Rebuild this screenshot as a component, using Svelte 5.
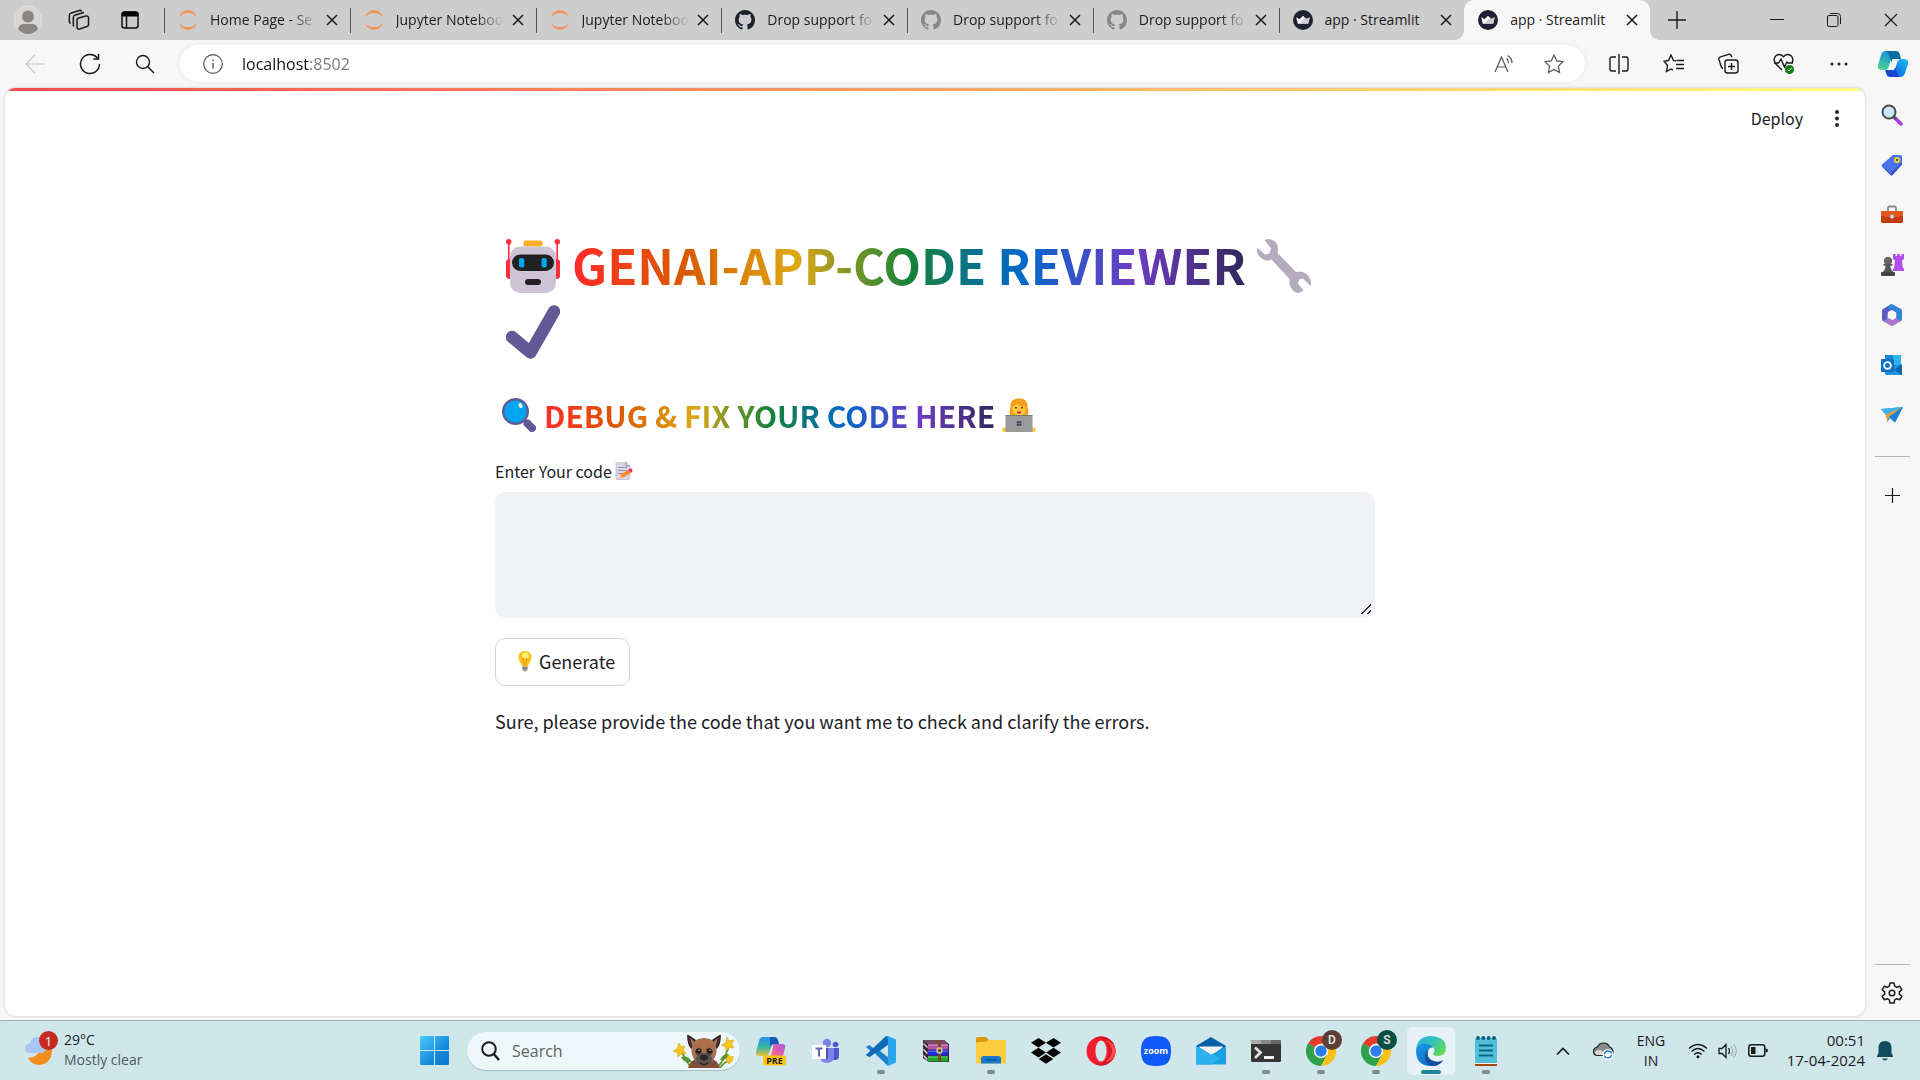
<script>
  let code = $state('');
  let address = $state('localhost:8502');
  let query = $state('');

  const tabs = [
    { title: 'Home Page - Se', icon: 'jupyter', clipped: true },
    { title: 'Jupyter Noteboo', icon: 'jupyter', clipped: true },
    { title: 'Jupyter Noteboo', icon: 'jupyter', clipped: true },
    { title: 'Drop support fo', icon: 'github', clipped: true },
    { title: 'Drop support fo', icon: 'github-grey', clipped: true },
    { title: 'Drop support fo', icon: 'github-grey', clipped: true },
    { title: 'app · Streamlit', icon: 'streamlit' },
    { title: 'app · Streamlit', icon: 'streamlit', active: true }
  ];
</script>

{#snippet closeIcon()}
  <svg width="12" height="12" viewBox="0 0 12 12" class="line"><path d="M1 1l10 10M11 1L1 11" stroke-width="1.5" /></svg>
{/snippet}

{#snippet favicon(kind)}
  {#if kind === 'jupyter'}
    <svg width="20" height="22" viewBox="0 0 20 22" fill="#ee9458">
      <path d="M1 8C2.500 3.500 6 1.200 10 1.200S17.500 3.500 19 8C16.500 5 13.500 3.900 10 3.900S3.500 5 1 8z" />
      <path d="M1 14C2.500 18.500 6 20.800 10 20.800s7.500-2.300 9-6.800c-2.500 3-5.500 4.100-9 4.100S3.500 17 1 14z" />
    </svg>
  {:else if kind === 'streamlit'}
    <svg width="20" height="20" viewBox="0 0 20 20">
      <circle cx="10" cy="10" r="10" fill="#1f2030" />
      <path d="M3.200 7.200l3.300 2 3.500-3.400 3.500 3.400 3.300-2-1.600 6.500H4.800z" fill="#fff" />
      <path d="M10 9l6.800-1.800-1.600 6.500H7z" fill="#b9b9bd" opacity=".7" />
    </svg>
  {:else}
    <svg width="20" height="20" viewBox="0 0 16 16" fill={kind === 'github' ? '#1b222b' : '#85888b'}>
      <path d="M8 0C3.580 0 0 3.580 0 8c0 3.540 2.290 6.530 5.470 7.590.4.070.55-.17.55-.38 0-.19-.01-.82-.01-1.490-2.010.37-2.530-.49-2.690-.94-.09-.23-.48-.94-.82-1.130-.28-.15-.68-.52-.01-.53.63-.01 1.080.58 1.230.82.72 1.210 1.870.87 2.330.66.070-.52.28-.87.51-1.070-1.780-.2-3.640-.89-3.640-3.950 0-.87.31-1.590.82-2.150-.08-.2-.36-1.020.08-2.120 0 0 .67-.21 2.200.82.64-.18 1.320-.27 2-.27s1.360.09 2 .27c1.530-1.040 2.200-.82 2.200-.82.44 1.100.16 1.920.08 2.120.51.56.82 1.270.82 2.150 0 3.070-1.870 3.750-3.650 3.950.29.25.54.73.54 1.480 0 1.070-.01 1.930-.01 2.200 0 .21.15.46.55.38A8.010 8.010 0 0 0 16 8c0-4.420-3.580-8-8-8z" />
    </svg>
  {/if}
{/snippet}

<!-- Sidebar icons -->
{#snippet sideSearch()}
  <svg width="22" height="22" viewBox="0 0 22 22">
    <path d="M14 14l6 6" stroke="#a83be8" stroke-width="3.500" stroke-linecap="round" />
    <path d="M12 12l3 3" stroke="#555" stroke-width="2.500" />
    <circle cx="8" cy="8" r="6.500" fill="#c8e7fb" stroke="#4c4c4c" stroke-width="2" />
  </svg>
{/snippet}
{#snippet sideTag()}
  <svg width="22" height="22" viewBox="0 0 22 22">
    <path d="M12 1h7.500Q21 1 21 3v7.500L11.500 21q-1 .8-2 0L1 12.500q-.8-1 0-2z" fill="#4a74ee" />
    <path d="M1 12.500L9.500 21q1 .8 2 0L21 10.500v-2L9.500 19z" fill="#3c50c8" />
    <circle cx="16" cy="6" r="2.200" fill="#3c50c8" stroke="#ffd629" stroke-width="1.800" />
  </svg>
{/snippet}
{#snippet sideTools()}
  <svg width="24" height="20" viewBox="0 0 24 20">
    <path d="M8 6V3q0-1.500 1.500-1.500h5Q16 1.500 16 3v3" fill="none" stroke="#8a8a8a" stroke-width="1.800" />
    <rect x="1" y="6" width="22" height="12" rx="1.500" fill="#c23c10" />
    <path d="M1 7.500Q1 6 2.500 6h19Q23 6 23 7.500V11q-11 2.500-22 0z" fill="#e3561c" />
    <rect x="10" y="9.500" width="4" height="4" rx="1.500" fill="#ddd" stroke="#888" stroke-width=".6" />
  </svg>
{/snippet}
{#snippet sideGames()}
  <svg width="24" height="24" viewBox="0 0 24 24">
    <path d="M13 1h2.500v2h1.700V1h2.600v2h1.700V1H24v5l-2 1.500.8 7 1.200 1.500V18H13v-2l1.200-1.500.8-7L13 6z" fill="#b44df0" />
    <circle cx="8" cy="8" r="4.200" fill="#666" />
    <path d="M3.500 11h9v1.800h-2.300q.2 4 3 6.200H2.800q2.800-2.200 3-6.200H3.500z" fill="#555" />
    <rect x="1" y="19" width="14" height="4" rx="1.200" fill="#444" />
  </svg>
{/snippet}
{#snippet sideOffice()}
  <svg width="22" height="24" viewBox="0 0 22 24">
    <path d="M9.500 1.500L2 6Q1 6.600 1 8v8q0 1.400 1 2l4.500 2.500L7 9l7-4z" fill="#5d5cc0" />
    <path d="M21 9v7q0 1.400-1 2l-8 4.700q-1 .5-2 0L2.500 18 8 15l3.500 2 4-2.500z" fill="#a978cc" />
    <path d="M11 1l9 5q1 .6 1 2v8q0 1.500-1.500 2.300L15 15V9.800L7 5.500l1-3.500z" fill="#3384d4" />
    <path d="M11 7.200l4.200 2.400v4.800L11 16.800l-4.200-2.400V9.600z" fill="#f7f7f7" />
  </svg>
{/snippet}
{#snippet sideOutlook()}
  <svg width="22" height="21" viewBox="0 0 22 21">
    <rect x="4" y="0" width="16" height="15" fill="#31b3ee" />
    <path d="M4 0h8v8H4z" fill="#1684d4" />
    <path d="M4 11l17-1.500V20H5.500Q4 20 4 18.500z" fill="#1c93dd" />
    <path d="M21 9.500V20L13 14.500z" fill="#0d62a8" />
    <rect x="0" y="4" width="13" height="13" rx="1" fill="#0d6fc6" />
    <circle cx="6.500" cy="10.500" r="3.400" fill="none" stroke="#fff" stroke-width="1.900" />
  </svg>
{/snippet}
{#snippet sidePlane()}
  <svg width="22" height="18" viewBox="0 0 22 18">
    <path d="M0 3l22-2-8 15.500L9 12.500 6.500 16 5 9z" fill="#2b9be8" />
    <path d="M0 3l22-2L5 9z" fill="#3bb3ea" />
    <path d="M22 1L5 8.500 6.500 16 8.500 10z" fill="#f4a21d" />
    <path d="M22 1L8.500 10.500 14 16.500z" fill="#1d7fd6" />
  </svg>
{/snippet}

<!-- Taskbar application icons -->
{#snippet appCopilot()}
  <svg width="32" height="32" viewBox="0 0 32 32">
    <defs>
      <linearGradient id="pre1" x1="0" y1="0" x2="0" y2="1"><stop offset="0" stop-color="#2a8de8" /><stop offset=".5" stop-color="#32b3a4" /><stop offset="1" stop-color="#e5c53e" /></linearGradient>
      <linearGradient id="pre2" x1="1" y1="0" x2="0" y2="1"><stop offset="0" stop-color="#a55ce8" /><stop offset=".5" stop-color="#ea5fa3" /><stop offset="1" stop-color="#ffa05a" /></linearGradient>
    </defs>
    <path d="M8 2h12l-7 19H4q-3.500 0-3-4L4 6q1-4 4-4z" fill="url(#pre1)" />
    <path d="M15 2h4q3 0 4 3l1 4h-5q-3 0-4 3z" fill="#1b56b8" />
    <path d="M18 9h9q4 0 3 4l-2 8q-1 4-5 4H11q4 0 5-5l2-7z" fill="url(#pre2)" />
    <rect x="8" y="20.500" width="23" height="10" rx="2.500" fill="#ffc412" />
    <text x="19.500" y="28.500" text-anchor="middle" class="pre">PRE</text>
  </svg>
{/snippet}
{#snippet appTeams()}
  <svg width="30" height="28" viewBox="0 0 30 28">
    <circle cx="16" cy="6" r="4.200" fill="#7b83eb" /><circle cx="24.500" cy="7.500" r="2.800" fill="#5059c9" />
    <path d="M20 11h8v8q0 4-4 4h-4z" fill="#5059c9" />
    <path d="M9 11h14v8q0 7-7 7t-7-7z" fill="#7b83eb" />
    <path d="M9 11h8v11H9.500z" fill="#4a52ae" />
    <rect x="1" y="8" width="14" height="14" fill="#fff" />
    <path d="M4.500 11.500h7M8 11.500v8" stroke="#6264a7" stroke-width="2" />
  </svg>
{/snippet}
{#snippet appCode()}
  <svg width="30" height="30" viewBox="0 0 30 30">
    <path d="M22 0L8.500 13 3.500 9 0 11l4.500 4L0 19l3.500 2 5-4L22 30l1-8-9-7 9-7z" fill="#1b7fcc" />
    <path d="M22 8L3.500 21 0 19 20 0h2z" fill="#0f69b4" />
    <path d="M22 0l8 3.500v23L22 30l-2-1.500q2 .5 2-2v-23q0-2.500-2-2z" fill="#2ba4ee" />
  </svg>
{/snippet}
{#snippet appRar()}
  <svg width="28" height="24" viewBox="0 0 28 24">
    <path d="M1 1h21l5 4v18H7l-6-4z" fill="#3b2438" />
    <path d="M1 1h21l4 4H6z" fill="#754966" />
    <path d="M6 5h20v5.500H6z" fill="#b552a3" /><path d="M6 11h20v5.500H6z" fill="#202bdc" /><path d="M6 17h20v5.500H6z" fill="#21a52f" />
    <path d="M1.500 3.500l4 4v2l-4-4zM1.500 9.500l4 4v2l-4-4zM1.500 15.500l4 4v2l-4-4z" fill="#ddd" />
    <path d="M6 6.200h20M6 12.200h20M6 18.200h20" stroke="#fff" stroke-opacity=".35" />
    <path d="M13 1l3 4v18h3V5l-3-4z" fill="#7c4b22" />
    <circle cx="17.500" cy="11.500" r="2.500" fill="none" stroke="#c9c2ad" stroke-width="1.500" />
  </svg>
{/snippet}
{#snippet appFiles()}
  <svg width="30" height="27" viewBox="0 0 30 27">
    <path d="M0 1.500Q0 0 1.500 0H10l3.500 3.500H28q2 0 2 2V12H0z" fill="#dc9a10" />
    <path d="M0 7q0-2 2-2h8l3-2h15q2 0 2 2v21.500H0z" fill="#ffcd42" />
    <path d="M5 26.500V22q0-3 3-3h14q3 0 3 3v4.500z" fill="#1679cf" />
    <path d="M9 22.800h12" stroke="#0b4f91" stroke-width="1.200" />
  </svg>
{/snippet}
{#snippet appDropbox()}
  <svg width="30" height="26" viewBox="0 0 30 26">
    <path d="M7.500 0L15 4.800 7.500 9.600 0 4.800zM22.500 0L30 4.800l-7.500 4.800L15 4.800zM7.500 9.800L15 14.600l-7.500 4.800L0 14.600zM22.500 9.800l7.500 4.800-7.500 4.800-7.500-4.800zM7.800 21L15 16.300l7.200 4.700-7.200 4.800z" fill="#000" />
  </svg>
{/snippet}
{#snippet appOpera()}
  <svg width="30" height="30" viewBox="0 0 30 30">
    <circle cx="15" cy="15" r="14.500" fill="#f51d30" />
    <path d="M15 .5a14.500 14.500 0 0 1 0 29q-5 0-6-3 8 3 12-4t0-15q-4-7-12-4 1-3 6-3z" fill="#d51425" />
    <path d="M19 4q7 5 7 11t-7 11Q30 24 29.500 15T19 4z" fill="#ff4b4b" />
    <ellipse cx="15" cy="15" rx="5.600" ry="10.500" fill="#cfe6eb" />
  </svg>
{/snippet}
{#snippet appZoom()}
  <svg width="30" height="30" viewBox="0 0 30 30">
    <path d="M15 0C26 0 30 4 30 15s-4 15-15 15S0 26 0 15 4 0 15 0z" fill="#1058f8" />
    <text x="15" y="17.500" text-anchor="middle" class="zoom">zoom</text>
  </svg>
{/snippet}
{#snippet appMail()}
  <svg width="30" height="28" viewBox="0 0 30 28">
    <path d="M0 9L15 0l15 9v6H0z" fill="#0a5fa9" />
    <path d="M3 10h24L15 20z" fill="#f3f3f3" /><path d="M0 9l15 9.500V27H0z" fill="#35bdf2" />
    <path d="M30 9v18.500H0L15 18z" fill="#1c9fe4" /><path d="M0 9v18.500h15l10-6.500z" fill="#2eb2ed" />
    <path d="M3 9.500h24L15 17.500z" fill="#f3f3f3" />
  </svg>
{/snippet}
{#snippet appTerminal()}
  <svg width="30" height="22" viewBox="0 0 30 22">
    <rect width="30" height="22" rx="1.500" fill="#353535" />
    <path d="M0 4V1.500Q0 0 1.500 0H10v4z" fill="#a9a9a9" /><path d="M10 0h10v4H10z" fill="#888" /><path d="M20 0h8.500Q30 0 30 1.500V4H20z" fill="#666" />
    <path d="M4 7.500l5.500 5-5.500 5.500" fill="none" stroke="#ddd" stroke-width="2.800" /><path d="M13 17.500h10" stroke="#fff" stroke-width="2.800" />
  </svg>
{/snippet}
{#snippet chrome(letter, fill)}
  <svg width="36" height="36" viewBox="0 0 36 36">
    <path d="M15 21L2 13.500A15 15 0 0 1 28 13.500z" fill="#e33b2e" />
    <path d="M15 21h0L2 13.500A15 15 0 0 0 15 36l6-11z" fill="#2da14c" />
    <path d="M15 21l6.100 4L15 36a15 15 0 0 0 13-22.500H15z" fill="#fbc116" />
    <circle cx="15" cy="21" r="7.200" fill="#fff" /><circle cx="15" cy="21" r="5.700" fill="#2b7de9" />
    <circle cx="26" cy="10" r="10" {fill} />
    <text x="26" y="14" text-anchor="middle" class="badge">{letter}</text>
  </svg>
{/snippet}
{#snippet appChromeD()}{@render chrome('D', '#5b4038')}{/snippet}
{#snippet appChromeS()}{@render chrome('S', '#064f42')}{/snippet}
{#snippet appEdge()}
  <svg width="30" height="30" viewBox="0 0 30 30">
    <defs>
      <linearGradient id="edgeTop" x1="0" y1="0" x2="1" y2=".6"><stop offset="0" stop-color="#2ba7e0" /><stop offset=".5" stop-color="#2fc2c4" /><stop offset="1" stop-color="#62da52" /></linearGradient>
      <linearGradient id="edgeLeft" x1="0" y1="0" x2=".6" y2="1"><stop offset="0" stop-color="#1b9ae0" /><stop offset="1" stop-color="#0d6dc9" /></linearGradient>
    </defs>
    <path d="M0 14Q1.500 0 15 0q15 1 15 12 0 7.500-8 8-5 0-5-2.500 1.500-1 1.500-3.500Q18 9 10 8.500 3 9 0 14z" fill="url(#edgeTop)" />
    <path d="M0 15q1-7.500 9-7.500 6 .5 8.500 4Q12 11 11.500 17q0 9 9.500 12-3 1-6 1Q0 29.500 0 15z" fill="url(#edgeLeft)" />
    <path d="M12.500 13.500q-3 6 2 10 6 4 13 .5-4 6-10.500 6Q9 28.500 9 20q0-4 3.500-6.500z" fill="#124f9e" />
  </svg>
{/snippet}
{#snippet appNotes()}
  <svg width="24" height="32" viewBox="0 0 24 32">
    <path d="M1 25h22v6H1z" fill="#a3480a" /><path d="M1 25h22v4H1z" fill="#f2f2f2" />
    <rect x="1" y="3" width="22" height="25" rx="1" fill="#51bfd8" />
    <path d="M5 10.500h14M5 15.500h14M5 20.500h14" stroke="#0d6482" stroke-width="1.800" />
    <g fill="#0c5c79"><circle cx="4" cy="3" r="1.900" /><circle cx="9.300" cy="3" r="1.900" /><circle cx="14.700" cy="3" r="1.900" /><circle cx="20" cy="3" r="1.900" /></g>
  </svg>
{/snippet}

<div class="desktop">
  <header class="tabstrip">
    <div class="strip-tools">
      <button aria-label="Profile">
        <svg width="28" height="30" viewBox="0 0 28 30"><ellipse cx="14" cy="15" rx="13.500" ry="14" fill="#d8d5d2" stroke="#e2e0de" /><circle cx="14" cy="11.500" r="6" fill="#8a8582" /><path d="M4 24q1-5 6-5h8q5 0 6 5-4 5-10 5T4 24z" fill="#8a8582" /></svg>
      </button>
      <button aria-label="Workspaces">
        <svg width="22" height="22" viewBox="0 0 22 22" class="line"><path d="M10.500 9l7.500-2q2.500-.5 2.500 2v6.500q0 1.500-1.500 2l-7.500 2.500q-2.500.5-2.500-2V11q0-1.500 1.500-2z" stroke-width="1.500" /><path d="M6 17.500q-.7-.5-.7-2V8.500q0-2 2-2.500L16 3.500M2.500 14.500q-1.200-.5-1.200-2V6.500q0-2 2-2.500l8-2.500q2-.5 2.500 1" stroke-width="1.500" /></svg>
      </button>
      <button aria-label="Tab actions">
        <svg width="18" height="18" viewBox="0 0 18 18"><rect x="1" y="1" width="16" height="16" rx="2.500" fill="none" stroke="#111" stroke-width="1.500" /><path d="M1 5V3q0-2 2-2h12q2 0 2 2v2z" fill="#000" stroke="#000" /><path d="M5.500 5v12" stroke="#111" stroke-width="1.500" /></svg>
      </button>
    </div>
    <nav class="tabs" aria-label="Open tabs">
      {#each tabs as tab}
        <div class="tab" class:active={tab.active}>
          <span class="favicon">{@render favicon(tab.icon)}</span>
          <button class="tab-title" class:clipped={tab.clipped}>{tab.title}</button>
          <button class="tab-close" aria-label="Close tab">{@render closeIcon()}</button>
        </div>
      {/each}
    </nav>
    <button class="new-tab" aria-label="New tab"><svg width="18" height="18" viewBox="0 0 18 18" class="line"><path d="M9 0v18M0 9h18" stroke-width="1.400" /></svg></button>
    <div class="window-controls">
      <button aria-label="Minimize"><svg width="14" height="14" viewBox="0 0 14 14" class="line"><path d="M0 6.500h14" /></svg></button>
      <button aria-label="Restore"><svg width="14" height="14" viewBox="0 0 14 14" class="line"><rect x=".5" y="2.500" width="10.500" height="11" rx="1.500" /><path d="M3 .5h7.500q3 0 3 3V11" /></svg></button>
      <button aria-label="Close"><svg width="14" height="14" viewBox="0 0 14 14" class="line"><path d="M1 1l12 12M13 1L1 13" stroke-width="1.100" /></svg></button>
    </div>
  </header>

  <div class="toolbar">
    <button aria-label="Back"><svg width="20" height="20" viewBox="0 0 20 20" class="line faint"><path d="M20 10H1M10 1L1 10l9 9" stroke-width="1.200" /></svg></button>
    <button aria-label="Refresh"><svg width="22" height="22" viewBox="0 0 22 22" class="line"><path d="M20.500 11A9.500 9.500 0 1 1 18 4.600L19.500 6M19.500 1v5h-5.200" stroke-width="1.500" /></svg></button>
    <button aria-label="Search"><svg width="20" height="20" viewBox="0 0 20 20" class="line"><circle cx="8" cy="8" r="6.500" stroke-width="1.400" /><path d="M12.800 12.800L19 19" stroke-width="1.500" /></svg></button>
    <div class="address">
      <button class="info" aria-label="Site information"><svg width="20" height="20" viewBox="0 0 20 20" class="line grey"><circle cx="10" cy="10" r="9.300" stroke-width="1.200" /><path d="M10 9v5.500M10 5.500v1.500" stroke-width="1.400" /></svg></button>
      <input aria-label="Address" bind:value={address} />
      <button aria-label="Read aloud"><svg width="20" height="20" viewBox="0 0 20 20" class="line grey"><path d="M1 18L7.500 3 14 18M3.500 13h8M12.500 4.500q2 1.500 2 4.500M14 1.500q4 3 4 7.500" stroke-width="1.200" /></svg></button>
      <button aria-label="Add to favorites"><svg width="20" height="20" viewBox="0 0 20 20" class="line grey"><path d="M10 1l2.700 5.900 6.300.8-4.600 4.400 1.200 6.400L10 15.400l-5.600 3.100 1.200-6.400L1 7.700l6.300-.8z" stroke-width="1.200" /></svg></button>
    </div>
    <button aria-label="Split screen"><svg width="20" height="20" viewBox="0 0 20 20" class="line"><path d="M7 3H3Q1 3 1 5v10q0 2 2 2h4M13 3h4q2 0 2 2v10q0 2-2 2h-4M10 0v20" stroke-width="1.400" /></svg></button>
    <button aria-label="Favorites"><svg width="21" height="20" viewBox="0 0 21 20" class="line"><path d="M13 7l-2.500-.5L8 1 5.500 6.500 1 7.200 4.500 11.500l-1 6L8 15l2 1.200M13.500 6.500H21M13 10.500h8M13 14.500h8" stroke-width="1.400" /></svg></button>
    <button aria-label="Collections"><svg width="21" height="21" viewBox="0 0 21 21" class="line"><rect x="7" y="7" width="13" height="13" rx="2.500" stroke-width="1.400" /><path d="M13.500 10v7M10 13.500h7M5 15.500Q3.500 15 3 13L1 6.500q-.5-2 1.500-2.700l8-2.500q2-.5 2.800 1.500l.5 1.500" stroke-width="1.400" /></svg></button>
    <button aria-label="Browser essentials"><svg width="21" height="21" viewBox="0 0 21 21" class="line"><path d="M9 17L2.500 10.500q-3-4.500.5-7.800Q7 0 10.500 3.800 14 0 18 2.700q3.500 3.300.5 7.800M1 10h4.500L8 6l3.500 8 2.500-5 1 1h5" stroke-width="1.400" /><circle cx="16.500" cy="16.500" r="4.500" fill="#107c10" stroke="none" /><path d="M14.500 16.500l1.500 1.500 2.500-3" stroke="#fff" /></svg></button>
    <button aria-label="Settings and more"><svg width="18" height="4" viewBox="0 0 18 4" fill="#222"><circle cx="2" cy="2" r="1.500" /><circle cx="9" cy="2" r="1.500" /><circle cx="16" cy="2" r="1.500" /></svg></button>
    <button class="copilot" aria-label="Copilot">
      <svg width="30" height="28" viewBox="0 0 30 28">
        <defs>
          <linearGradient id="cp1" x1=".3" y1="0" x2="0" y2="1"><stop offset="0" stop-color="#1792dc" /><stop offset="1" stop-color="#4edb8b" /></linearGradient>
          <linearGradient id="cp2" x1="1" y1="0" x2="0" y2="1"><stop offset="0" stop-color="#16c5f4" /><stop offset="1" stop-color="#174ee0" /></linearGradient>
        </defs>
        <path d="M8 1h10q-3 1-4 5l-3 10q-1 4-5 4H4q-5 0-4-5L3 5q1-4 5-4z" fill="url(#cp1)" />
        <path d="M9 1h9q3 0 4 4l1 4h-4q-4 0-5 4z" fill="#0d6f9f" />
        <path d="M22 27H12q3-1 4-5l3-9q1-4 5-4h2q5 0 4 5l-3 9q-1 4-5 4z" fill="url(#cp2)" />
        <path d="M21 27h-9q-3 0-4-4l-1-3h4q4 0 5-5z" fill="#1a47d2" />
        <path d="M14.500 9H20l-4 11H11z" fill="#f7f7f7" />
      </svg>
    </button>
  </div>

  <div class="body">
    <div class="page">
      <div class="decoration"></div>
      <div class="app-header">
        <button class="deploy">Deploy</button>
        <button class="kebab" aria-label="Main menu"><svg width="4" height="17" viewBox="0 0 4 17" fill="#262730"><circle cx="2" cy="2" r="2" /><circle cx="2" cy="8.500" r="2" /><circle cx="2" cy="15" r="2" /></svg></button>
      </div>
      <main>
        <h1>
          <svg class="emoji" viewBox="0 0 54 54" aria-label="Robot" role="img">
            <g fill="#f92f3c"><circle cx="2.700" cy="2.700" r="2.700" /><circle cx="51.300" cy="2.700" r="2.700" /><path d="M2 2h1.600v20H2zM50.400 2H52v20h-1.600z" /><path d="M0 23q0-3 4-3v20q-4 0-4-3zM54 23q0-3-4-3v20q4 0 4-3z" /></g>
            <rect x="17.500" y="1.500" width="19" height="6" rx="2" fill="#fcae28" />
            <rect x="4" y="7.500" width="46" height="46.500" rx="10" fill="#cdc4d6" />
            <rect x="6" y="15.500" width="42" height="16.500" rx="8.200" fill="#212121" />
            <rect x="13" y="19" width="5.300" height="9.500" rx="2" fill="#00a6ed" /><rect x="35.500" y="19" width="5.300" height="9.500" rx="2" fill="#00a6ed" />
            <rect x="19" y="40" width="16" height="6" rx="3" fill="#212121" />
          </svg>
          <span class="rainbow">GENAI-APP-CODE REVIEWER</span>
          <svg class="emoji" viewBox="0 0 54 54" aria-label="Wrench" role="img">
            <path d="M7.500 1Q14-1.500 18.500 3q4 4.500 2 11l18.500 19q6-2 11 2.500 5.500 5.500 3.500 11.500L46 39.500l-4 1-1 4 5.500 7q-6.500 5-11-.5-4.500-5-2.500-10.500L14.500 20.500Q9 23 4 19-1.500 14.500.5 9l7.500 6.500 4.500-1 1.500-5z" fill="#b4acbc" />
          </svg>
          <svg class="emoji" viewBox="0 0 54 54" aria-label="Check mark" role="img"><path d="M6 32l18.500 15.500L48 6.500" fill="none" stroke="#635994" stroke-width="12.500" stroke-linecap="round" stroke-linejoin="round" /></svg>
        </h1>
        <h3>
          <svg class="emoji" viewBox="0 0 34 34" aria-label="Magnifying glass" role="img">
            <path d="M20 20l5 5" stroke="#533566" stroke-width="3.500" /><path d="M25.500 25.500l4.500 4.500" stroke="#635994" stroke-width="8" stroke-linecap="round" />
            <circle cx="13.500" cy="13.500" r="12.300" fill="#00a6ed" stroke="#635994" stroke-width="2.400" /><ellipse cx="18.500" cy="7.500" rx="2" ry="2.600" fill="#e4f7ff" transform="rotate(-30 18.500 7.500)" />
          </svg>
          <span class="rainbow">DEBUG &amp; FIX YOUR CODE HERE</span>
          <svg class="emoji" viewBox="0 0 34 34" aria-label="Woman technologist" role="img">
            <path d="M8 17q-1-4 .5-8Q8 0 17 .5 26 0 25.500 9q1.500 4 .5 8z" fill="#f3a01c" /><path d="M10.500 9q2 0 4-3 4 3 9 2.500V12q0 5.500-6.500 5.500T10.500 12z" fill="#ffc83d" />
            <path d="M13 9.700h2M19 9.700h2" stroke="#6d4534" stroke-width="1.500" /><path d="M15 14q2 2.500 4 0z" fill="#d0183c" stroke="#d0183c" />
            <rect x="0" y="29.500" width="5" height="4.500" rx="2.200" fill="#ffc83d" /><rect x="29" y="29.500" width="5" height="4.500" rx="2.200" fill="#ffc83d" />
            <path d="M3.500 17h27v17h-27z" fill="#9b9b9b" /><path d="M3.500 17h27v1h-27z" fill="#7c7c7c" />
            <path d="M14.800 23.300h2v2h-2zM17.300 23.300h2v2h-2zM14.800 25.800h2v2h-2zM17.300 25.800h2v2h-2z" fill="#4b2c63" />
          </svg>
        </h3>
        <label for="code">
          Enter Your code
          <svg width="18" height="18" viewBox="0 0 18 18"><path d="M2 0h9l4 4v12.500q0 1-1 1H2q-1 0-1-1V1q0-1 1-1z" fill="#dcd6e4" stroke="#bdb6c7" stroke-width=".7" /><path d="M3 5.500h9M3 8.500h9M3 11.500h5M11 0v4h4" stroke="#998ea4" fill="none" /><path d="M4.500 16.500l1.500-4L14 7.500l2.500 3L8 15.500z" fill="#ff822d" /><path d="M13.200 8l1.300-1.300q2-.7 3 1.300 0 1.500-1.200 2.500z" fill="#f8255f" /><path d="M4.500 16.500l1.500-3 1.700 2z" fill="#ffce7c" /></svg>
        </label>
        <textarea id="code" bind:value={code}></textarea>
        <button class="generate">
          <svg width="14" height="21" viewBox="0 0 14 21"><path d="M7 0q6.500 0 6.500 6.500 0 3-2 5.500-1.300 1.500-1.500 3.500H4Q3.800 13.500 2.500 12 .5 9.500.5 6.500.5 0 7 0z" fill="#fcc21b" /><ellipse cx="7.500" cy="4.500" rx="3.500" ry="3" fill="#fff176" /><path d="M5 7l1.200 8M9 7l-1.200 8" stroke="#e58a12" stroke-width=".8" /><path d="M4.500 15.500h5V19L8 20.500H6L4.500 19z" fill="#9b9b9b" /><path d="M4.500 17h5" stroke="#666" /></svg>
          Generate
        </button>
        <p>Sure, please provide the code that you want me to check and clarify the errors.</p>
      </main>
    </div>
    <aside class="sidebar">
      {#each [{ label: 'Search', icon: sideSearch }, { label: 'Shopping', icon: sideTag }, { label: 'Tools', icon: sideTools }, { label: 'Games', icon: sideGames }, { label: 'Microsoft 365', icon: sideOffice }, { label: 'Outlook', icon: sideOutlook }, { label: 'Drop', icon: sidePlane }] as item}
        <button aria-label={item.label}>{@render item.icon()}</button>
      {/each}
      <hr class="first" />
      <button aria-label="Customize"><svg width="15" height="15" viewBox="0 0 15 15" class="line"><path d="M7.500 0v15M0 7.500h15" stroke-width="1.200" /></svg></button>
      <hr class="last" />
      <button aria-label="Settings"><svg width="22" height="22" viewBox="0 0 22 22" class="line"><path d="M9 1h4l.7 3.200 2 1.100 3.100-1 2 3.400-2.400 2.200v2.200l2.400 2.200-2 3.400-3.100-1-2 1.100L13 21H9l-.7-3.200-2-1.100-3.100 1-2-3.400 2.400-2.200V9.900L1.200 7.700l2-3.400 3.100 1 2-1.100z" stroke-width="1.500" stroke-linejoin="round" /><circle cx="11" cy="11" r="2.800" stroke-width="1.500" /></svg></button>
    </aside>
  </div>

  <footer class="taskbar">
    <button class="weather">
      <svg width="36" height="38" viewBox="0 0 36 38">
        <path d="M16 14Q17 26 4 27q4 7 11 7Q28 33 28 18q-5-4-12-4z" fill="#f38d1c" />
        <path d="M5 22q-4-1-4-5t5-5q1-6 7-6 5 0 7 6 4 1 3 5t-5 5z" fill="#a9c5f5" />
        <circle cx="24.500" cy="9.500" r="9.500" fill="#c62b20" /><text x="24.500" y="14.500" text-anchor="middle" class="count">1</text>
      </svg>
      <span><b>29°C</b><small>Mostly clear</small></span>
    </button>
    <div class="apps">
      <button class="app" aria-label="Start">
        <svg width="29" height="29" viewBox="0 0 29 29"><defs><linearGradient id="win" x1="0" y1="0" x2="1" y2="1"><stop offset="0" stop-color="#4ccafc" /><stop offset=".6" stop-color="#158bde" /><stop offset="1" stop-color="#0a74ce" /></linearGradient></defs><path d="M1 0h13v14H0V1q0-1 1-1zM15 0h13q1 0 1 1v13H15zM0 15h14v14H1q-1 0-1-1zM15 15h14v13q0 1-1 1H15z" fill="url(#win)" /></svg>
      </button>
      <label class="search">
        <svg width="19" height="20" viewBox="0 0 19 20" class="line"><circle cx="8" cy="8" r="6.800" stroke-width="2" /><path d="M12.800 13L18 19" stroke-width="2.400" /></svg>
        <input aria-label="Search" placeholder="Search" bind:value={query} />
        <svg width="62" height="34" viewBox="0 0 62 34">
          <path d="M6 13q4 8 12 21M56 11Q53 24 44 34M55 27q-5 2-8 7" fill="none" stroke="#5f9a2e" stroke-width="1.700" />
          <path d="M8 23q7-2 11 5-8 2-11-5zM56 20q-6-1-9 6 7 1 9-6z" fill="#59962f" />
          <g fill="#f4c51c" stroke="#d9980c" stroke-width=".5">
            <path d="M6 9l2.500 4 3.500-1-1.500 4 2.500 4-4.500-.5L5 23l-.5-4L0 17l4-2zM54 3l2 4 5-1-2.500 4 2.500 4-4.500-.5L53 17l-.5-4-4-2 4-2zM55 20l2.500 3 3-.5L59 27l-3 3-3-3z" />
          </g>
          <path d="M15 34q2-8 9-9h14q7 1 9 9z" fill="#825035" />
          <path d="M14 1q1-1 9 5l-3 10q-6-3-6-15zM48 1q-1-1-9 5l3 10q6-3 6-15z" fill="#412c2d" /><path d="M17 4l5 4-2 6zM45 4l-5 4 2 6z" fill="#a9705b" />
          <path d="M20 10q3-6 11-6t11 6q3 7 0 13-3 8-11 8t-11-8q-3-6 0-13z" fill="#a9714b" />
          <path d="M22 17q4-6 7-1l-1 6q-5 1-6-5zM40 17q-4-6-7-1l1 6q5 1 6-5z" fill="#583a30" />
          <ellipse cx="31" cy="25.500" rx="8.500" ry="6.500" fill="#5c5250" /><ellipse cx="31" cy="23.500" rx="4" ry="2.800" fill="#242429" />
          <circle cx="25.500" cy="17" r="2.300" fill="#171311" /><circle cx="36.500" cy="17" r="2.300" fill="#171311" /><circle cx="26" cy="16.300" r=".7" fill="#fff" /><circle cx="37" cy="16.300" r=".7" fill="#fff" />
          <path d="M27 29q4 3 8 0" fill="none" stroke="#252020" stroke-width="1.200" />
        </svg>
      </label>
      {#each [{ label: 'Copilot', icon: appCopilot }, { label: 'Teams', icon: appTeams }, { label: 'Visual Studio Code', icon: appCode, open: true }, { label: 'WinRAR', icon: appRar }, { label: 'File Explorer', icon: appFiles, open: true }, { label: 'Dropbox', icon: appDropbox }, { label: 'Opera', icon: appOpera }, { label: 'Zoom', icon: appZoom }, { label: 'Mail', icon: appMail }, { label: 'Terminal', icon: appTerminal, open: true }, { label: 'Chrome D', icon: appChromeD, open: true, badge: true }, { label: 'Chrome S', icon: appChromeS, open: true, badge: true }, { label: 'Edge', icon: appEdge, open: true, current: true }, { label: 'Notepad', icon: appNotes, open: true }] as app}
        <button class="app" class:open={app.open} class:current={app.current} class:badged={app.badge} aria-label={app.label}>{@render app.icon()}</button>
      {/each}
    </div>
    <div class="tray">
      <button class="wide" aria-label="Show hidden icons"><svg width="14" height="8" viewBox="0 0 14 8" class="line"><path d="M1 7.500l6-6 6 6" stroke-width="1.600" /></svg></button>
      <button class="wide" aria-label="OneDrive">
        <svg width="21" height="18" viewBox="0 0 21 18"><path d="M4 13.500q-3.500-.5-3.500-4T4.500 5Q6 1 10.500 1q4.500 0 6 4 3.500 1 3.500 5t-4 3.500z" fill="#8b8b8b" stroke="#222" stroke-width="1.200" /><path d="M2 10q4-4 9 0l-1 3H4q-2-.5-2-3z" fill="#d9d9d9" /><circle cx="15" cy="12.500" r="5.500" fill="#fff" /><path d="M11.500 12q.5-3 3.500-3 2 0 3 1.500V9M18.500 13q-.5 3-3.500 3-2 0-3-1.500V16" fill="none" stroke="#1177c8" stroke-width="1.300" /></svg>
      </button>
      <button class="lang">ENG<br />IN</button>
      <button class="status" aria-label="Network, volume and battery">
        <svg width="20" height="16" viewBox="0 0 20 16" class="line"><path d="M1 5.500q9-8 18 0M3.500 8.500q6.500-6 13 0M6.200 11.500q3.800-3.500 7.600 0" stroke-width="1.400" /><circle cx="10" cy="13.800" r="1.500" fill="#1b1b1b" stroke="none" /></svg>
        <svg width="20" height="16" viewBox="0 0 20 16" class="line"><path d="M1 5.500h3L8 1.500v13l-4-4H1zM10.500 5q2 3 0 6" stroke-width="1.300" /><path d="M13 3q3.500 5 0 10M15.500 1q5.500 7 0 14" stroke="#9db0b5" stroke-width="1.200" /></svg>
        <svg width="20" height="13" viewBox="0 0 20 13" class="line"><rect x=".8" y=".8" width="16" height="11.400" rx="2.500" stroke-width="1.500" /><rect x="3" y="3" width="4.500" height="7" fill="#1b1b1b" stroke="none" /><path d="M17.500 4.500q2.500 0 2.500 2t-2.500 2z" fill="#1b1b1b" stroke="none" /></svg>
      </button>
      <button class="clock">00:51<br />17-04-2024</button>
      <button class="bell" aria-label="Notifications"><svg width="18" height="20" viewBox="0 0 18 20" fill="#124c5c"><path d="M9 0q6.500 0 6.500 7v5L17 15q.5 1-.5 1h-15q-1 0-.5-1l1.500-3V7Q2.500 0 9 0zM6 17.500h6q-1 2-3 2t-3-2z" /></svg></button>
    </div>
  </footer>
</div>

<style>
  :global(body) { margin: 0; }
  * { box-sizing: border-box; }
  button, input, textarea { font: inherit; color: inherit; }
  button { display: flex; align-items: center; justify-content: center; border: 0; background: none; padding: 0; }
  input { border: 0; outline: 0; background: none; padding: 0; min-width: 0; }
  svg { flex: none; display: block; }
  .line { fill: none; stroke: #1b1b1b; }
  .line.grey { stroke: #555; }
  .line.faint { stroke: #c4c4c4; }

  .desktop {
    display: grid;
    grid-template-rows: 40px 48px 1fr 60px;
    min-height: 100vh;
    background: #f7f7f7;
    color: #1b1b1b;
    font-family: "Open Sans", "Noto Sans", sans-serif;
    font-size: 14px;
  }

  .tabstrip { display: flex; background: #cdcdcd; }
  .strip-tools { display: flex; padding: 0 9px 0 2px; }
  .strip-tools button { width: 51px; }
  .tabs { display: flex; flex: 0 1 1486px; min-width: 0; }
  .tab { position: relative; flex: 1 1 0; min-width: 0; display: flex; align-items: center; padding: 0 12px 0 14px; }
  .tab::before { content: ""; position: absolute; left: 0; top: 8px; width: 1px; height: 25px; background: #555; }
  .favicon { width: 32px; flex: none; }
  .tab-title { display: block; flex: 1; min-width: 0; overflow: hidden; white-space: nowrap; text-align: left; line-height: 20px; }
  .tab-title.clipped { mask-image: linear-gradient(to right, #000 calc(100% - 28px), transparent); }
  .tab-close { width: 12px; margin-left: 8px; flex: none; }
  .tab.active { background: #f7f7f7; border-radius: 10px 10px 0 0; }
  .tab.active::before, .tab.active::after { content: ""; position: absolute; top: auto; bottom: 0; width: 10px; height: 10px; }
  .tab.active::before { left: -10px; background: radial-gradient(circle at 0 0, #cdcdcd 10px, #f7f7f7 10px); }
  .tab.active::after { right: -10px; background: radial-gradient(circle at 100% 0, #cdcdcd 10px, #f7f7f7 10px); }
  .new-tab { width: 54px; }
  .window-controls { display: flex; margin-left: auto; padding-right: 1px; }
  .window-controls button { width: 57px; }

  .toolbar { display: flex; align-items: center; padding: 0 0 1px 7px; }
  .toolbar > button { width: 55px; height: 40px; flex: none; }
  .toolbar > .copilot { width: 54px; }
  .address { flex: 1; min-width: 0; display: flex; align-items: center; height: 37px; margin: 0 6px 0 8px; padding: 0 6px 0 8px; border-radius: 19px; background: #fff; box-shadow: 0 0 5px #e6e6e6; }
  .address button { width: 50px; }
  .address input {
    flex: 1; margin-left: 4px; font-size: 16px; line-height: 24px;
    color: transparent; caret-color: #111;
    background: linear-gradient(to right, #111 67px, #767676 67px); background-clip: text;
  }

  .body { display: flex; min-height: 0; }
  .page { flex: 1; min-width: 0; margin: 0 0 4px 5px; background: #fff; border-radius: 10px; overflow: hidden; box-shadow: 0 0 3px #bdbdbd; color: #1c1d27; font-family: "Noto Sans CJK SC", "Noto Sans", sans-serif; font-size: 18px; }
  .decoration { height: 3px; background: linear-gradient(to right, #ff4b4b, #fffd80); }
  .app-header { display: flex; justify-content: flex-end; height: 56px; padding: 0 16px 2px 0; }
  .deploy { font-size: 16px; }
  .kebab { width: 24px; margin-left: 22px; }
  main { max-width: 880px; margin: 0 auto; padding-top: 86px; }
  h1, h3 { display: flex; flex-wrap: wrap; align-items: center; margin: 0; }
  h1 { font-size: 49px; line-height: 66px; font-weight: 700; }
  h1 .emoji { width: 54px; height: 54px; margin: 6px 12px 6px 11px; }
  h1 .rainbow { margin-top: -4px; }
  h3 { margin-top: 29px; font-size: 30px; line-height: 42px; font-weight: 600; }
  h3 .emoji { width: 34px; height: 34px; margin: 0 8px 0 7px; }
  .rainbow { color: transparent; background: linear-gradient(to right, #ff2b2b, #d95a00, #dea816, #158237, #0068c9, #6f3cc4, #31285a); background-clip: text; }
  main label { display: flex; align-items: center; gap: 3px; margin-top: 21px; font-size: 16px; line-height: 28px; }
  textarea { display: block; width: 100%; height: 126px; margin-top: 7px; padding: 12px; border: 0; outline: 0; border-radius: 10px; background: #f0f2f6; resize: vertical; }
  textarea::-webkit-resizer { background: linear-gradient(135deg, transparent 48%, #333 48% 58%, transparent 58% 76%, #333 76% 86%, transparent 86%) 1px 1px / 10px 10px no-repeat; }
  .generate { gap: 7px; height: 48px; margin-top: 20px; padding: 0 14px 2px 22px; border: 1px solid #d4d4d8; border-radius: 10px; background: #fff; }
  p { margin: 21px 0 0; line-height: 28px; }

  .sidebar { display: flex; flex-direction: column; align-items: center; width: 55px; padding: 2px 1px 2px 0; }
  .sidebar button { width: 50px; height: 50px; flex: none; }
  hr { width: 35px; margin: 16px 0 13px; border: 0; border-top: 1px solid #b5b5b5; }
  hr.last { margin: auto 0 3px; }

  .taskbar { display: grid; grid-template-columns: 1fr auto 1fr; align-items: stretch; border-top: 1px solid #a4b4b9; background: #cfe6eb; }
  .weather { justify-content: flex-start; gap: 4px; padding: 0 0 2px 24px; text-align: left; }
  .weather span { display: grid; line-height: 20px; }
  b { font-weight: 400; }
  small { font-size: 14px; color: #51595c; }
  .apps { display: flex; align-items: center; }
  .app { position: relative; width: 55px; height: 48px; }
  .app.badged svg { margin: 0 0 6px 6px; }
  .app.open::after { content: ""; position: absolute; left: 24px; bottom: 1px; width: 8px; height: 4px; border-radius: 2px; background: #7d8a8f; }
  .app.current { width: 48px; margin: 0 3px 0 4px; border-radius: 5px; background: #e6f2f7; }
  .app.current::after { left: 14px; width: 20px; background: #23839a; bottom: 1px; }
  .search { display: flex; align-items: center; width: 273px; height: 38px; margin: 0 3px 0 5px; padding: 0 5px 0 14px; border-radius: 19px; background: #eef7fa; box-shadow: 0 1px 1px #a8bbc0; }
  .search input { flex: 1; margin-left: 12px; font-size: 16px; line-height: 24px; }
  .search input::placeholder { color: #5c6366; opacity: 1; }
  .tray { display: flex; justify-content: flex-end; padding-right: 21px; line-height: 20px; }
  .wide { width: 40px; }
  .lang { width: 56px; margin-right: 4px; }
  .status { width: 90px; gap: 10px; }
  .clock { width: 92px; justify-content: flex-end; padding-bottom: 2px; text-align: right; font-size: 15px; }
  .bell { width: 28px; margin-left: 6px; }

  .pre { font: 700 9px "Open Sans", sans-serif; fill: #222; }
  .zoom { font: 700 9px "Open Sans", sans-serif; fill: #fff; }
  .badge { font: 600 12px Roboto, sans-serif; fill: #e4e0dd; }
  .count { font: 13px "Open Sans", sans-serif; fill: #fff; }
</style>
